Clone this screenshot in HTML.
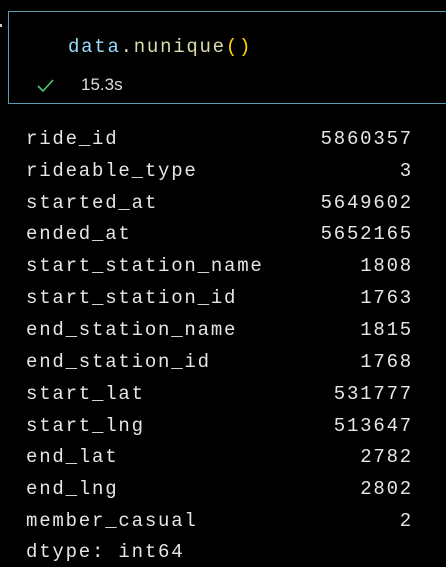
<!DOCTYPE html>
<html><head><style>
body{margin:0;background:#000;width:446px;height:567px;overflow:hidden;position:relative;font-family:"Liberation Mono",monospace;}
.box{position:absolute;left:8px;top:11px;width:460px;height:93px;border:1px solid #5b9cb0;box-sizing:border-box;}
.code{position:absolute;left:68px;top:36px;font-size:19px;letter-spacing:1.75px;color:#dcdcaa;white-space:pre;}
.t{position:absolute;left:81px;top:75px;font-family:"Liberation Sans",sans-serif;font-size:17px;color:#ddd;}
.row{position:absolute;left:26px;width:385px;font-size:19px;letter-spacing:1.8px;color:#e6e6e6;white-space:pre;height:24px;line-height:24px;}
.row span{position:absolute;right:-2px;top:0;}
</style></head><body>
<div style="position:absolute;left:0;top:24px;width:2px;height:3px;background:#ccc"></div>
<div class="box"></div>
<div class="code"><span style="color:#9cdcfe">data</span>.nunique<span style="color:#ffd700">()</span></div>
<svg style="position:absolute;left:36px;top:77px" width="20" height="16"><path d="M2 9 L7 14 L17 3" stroke="#4ec96b" stroke-width="1.6" fill="none"/></svg>
<div class="t">15.3s</div>
<div class="row" style="top:127px">ride_id<span>5860357</span></div>
<div class="row" style="top:159px">rideable_type<span>3</span></div>
<div class="row" style="top:191px">started_at<span>5649602</span></div>
<div class="row" style="top:222px">ended_at<span>5652165</span></div>
<div class="row" style="top:254px">start_station_name<span>1808</span></div>
<div class="row" style="top:286px">start_station_id<span>1763</span></div>
<div class="row" style="top:318px">end_station_name<span>1815</span></div>
<div class="row" style="top:350px">end_station_id<span>1768</span></div>
<div class="row" style="top:382px">start_lat<span>531777</span></div>
<div class="row" style="top:414px">start_lng<span>513647</span></div>
<div class="row" style="top:445px">end_lat<span>2782</span></div>
<div class="row" style="top:477px">end_lng<span>2802</span></div>
<div class="row" style="top:509px">member_casual<span>2</span></div>
<div class="row" style="top:540px">dtype: int64</div>
</body></html>
